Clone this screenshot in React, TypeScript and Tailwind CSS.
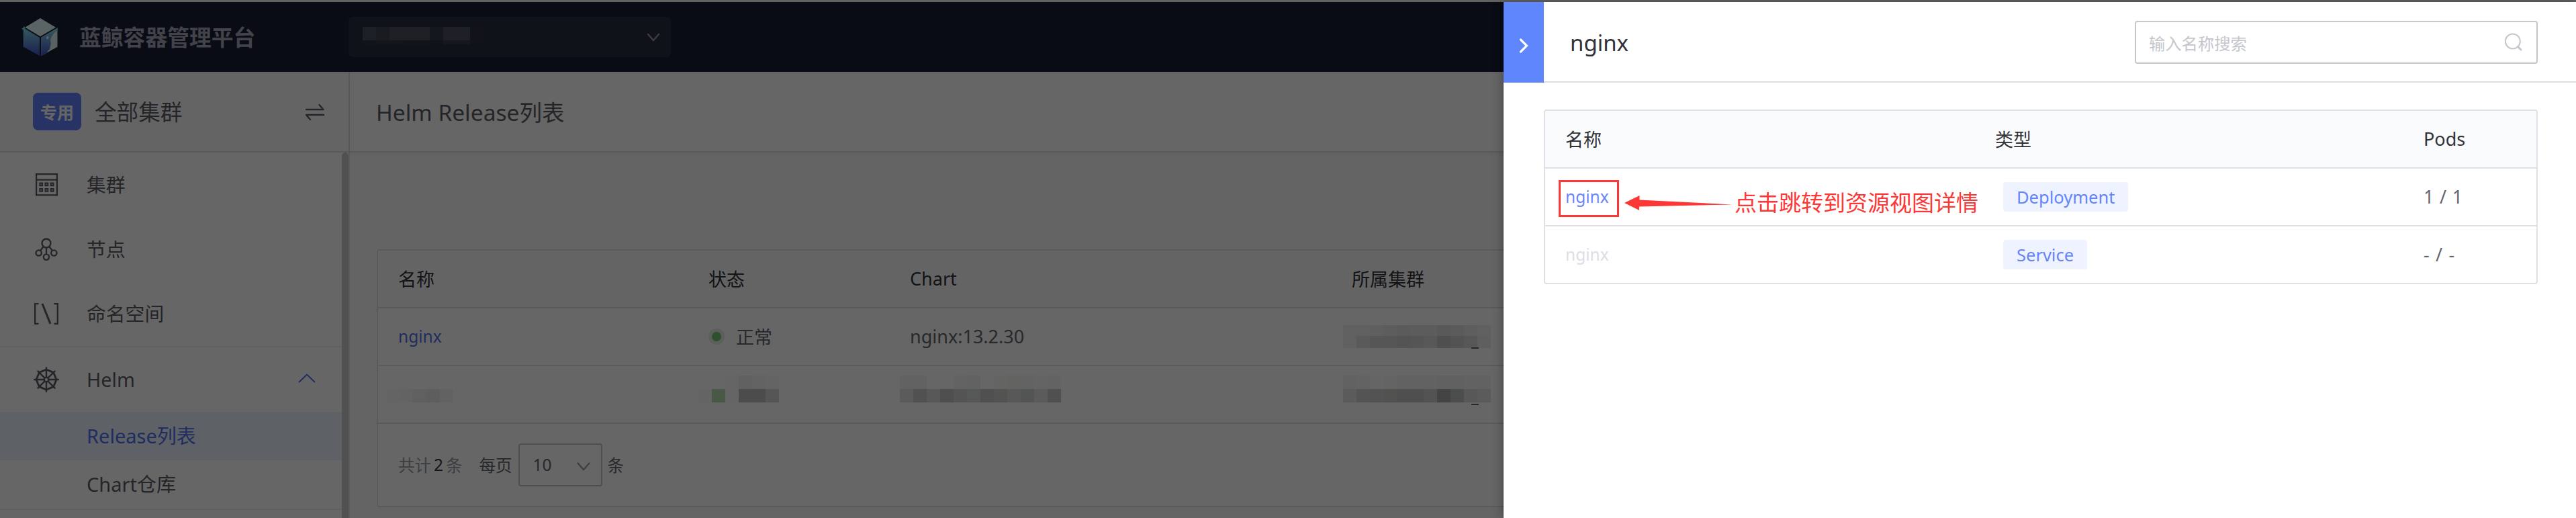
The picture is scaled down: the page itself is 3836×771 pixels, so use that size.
import type { ReactNode } from 'react';

/* ---------- icons ---------- */

function Logo() {
  return (
    <svg width="54" height="56" viewBox="0 0 54 56">
      <defs>
        <linearGradient id="face" x1="0" y1="14" x2="0" y2="56" gradientUnits="userSpaceOnUse">
          <stop offset="0" stopColor="#84dcf0" />
          <stop offset="0.4" stopColor="#6ba5dc" />
          <stop offset="1" stopColor="#4250c8" />
        </linearGradient>
      </defs>
      <path d="M28 0 51 13.7 28 27.3 5.3 13.7Z" fill="#e4fafa" />
      <path d="M0 15.5 2.8 14.6 3.6 11.8Q5.6 12.6 5.4 15.8L27 29V56L2.7 42.7V17.4Z" fill="url(#face)" />
      <path d="M29 29 53.5 14.5V42.7L29.5 56Z" fill="#dff5f2" />
      <path d="M29 29 53.7 14.5V18Q44 25 43 33 44.500 39 42.500 43 43 46 40 48 38 53 29.500 56Z" fill="url(#face)" />
      <ellipse cx="38.700" cy="29" rx="1.700" ry="2.400" fill="#e8ffff" transform="rotate(20 38.700 29)" />
    </svg>
  );
}

function Chevron({ className, w, h, points, sw }: { className?: string; w: number; h: number; points: string; sw: number }) {
  return (
    <svg className={className} width={w} height={h} viewBox={`0 0 ${w} ${h}`} fill="none" stroke="currentColor" strokeWidth={sw}>
      <polyline points={points} strokeLinecap="round" />
    </svg>
  );
}

function SwapIcon() {
  return (
    <svg width="30" height="26" viewBox="0 0 30 26" fill="none" stroke="currentColor" strokeWidth="2.400" strokeLinecap="round" strokeLinejoin="round">
      <path d="M2 9H27.500L21.500 2" />
      <path d="M28 17H2L8 24" />
    </svg>
  );
}

function ClusterIcon() {
  return (
    <svg width="33" height="34" viewBox="0 0 33 34" fill="none" stroke="currentColor" strokeWidth="2.200">
      <path d="M1.100 1.100H31.900V32.400H1.100ZM1.100 9.600H31.900" />
      <path d="M6.400 14.600h3.600v3.600h-3.600zM14.600 14.600h3.600v3.600h-3.600zM22.800 14.600h3.600v3.600h-3.600zM6.400 23h3.600v3.600h-3.600zM14.600 23h3.600v3.600h-3.600zM22.800 23h3.600v3.600h-3.600z" />
    </svg>
  );
}

function NodeIcon() {
  return (
    <svg width="34" height="34" viewBox="0 0 34 34" fill="none" stroke="currentColor" strokeWidth="2.300">
      <circle cx="17" cy="8" r="6.500" />
      <circle cx="5.700" cy="22.500" r="4.200" />
      <circle cx="28.300" cy="22.500" r="4.200" />
      <circle cx="17" cy="28.600" r="4.200" />
      <path d="M17 14.500V24.400M12.800 13 8 19M21.200 13 26 19" />
    </svg>
  );
}

function NamespaceIcon() {
  return (
    <svg width="38" height="32" viewBox="0 0 38 32" fill="none" stroke="currentColor" strokeWidth="2.300">
      <path d="M7.500 1.200H2.200V30.800H7.500M30.500 1.200H35.800V30.800H30.500" />
      <path d="M13 1 25 31" strokeWidth="3" />
    </svg>
  );
}

function HelmIcon() {
  return (
    <svg width="38" height="38" viewBox="-19 -19 38 38" fill="none" stroke="currentColor" strokeWidth="2.400" strokeLinecap="round">
      <path d="M0 -15 10.600 -10.600 15 0 10.600 10.600 0 15 -10.600 10.600 -15 0 -10.600 -10.600Z" strokeWidth="2.800" />
      <circle r="3.400" />
      <path d="M0 -3.400V-17.800M0 3.400V17.800M-3.400 0H-17.800M3.400 0H17.800" />
      <path d="M2.400 2.400 12.600 12.600M-2.400 2.400 -12.600 12.600M2.400 -2.400 12.600 -12.600M-2.400 -2.400 -12.600 -12.600" />
    </svg>
  );
}

function SearchIcon() {
  return (
    <svg width="28" height="28" viewBox="0 0 28 28" fill="none" stroke="#c4c6cc" strokeWidth="2">
      <circle cx="12.800" cy="12.500" r="11" />
      <path d="M20.500 20.500 25 25" strokeWidth="3" strokeLinecap="round" />
    </svg>
  );
}

/* ---------- masked values ---------- */

function Mosaic({ cells, height }: { cells: string[]; height: string }) {
  return (
    <div className={`flex ${height}`}>
      {cells.map((c, i) => (
        <div key={i} className={`w-5 ${c}`} />
      ))}
    </div>
  );
}

const projectTop = ['bg-[#4a5260]', 'bg-[#3e4452]', 'bg-[#4b525f]', 'bg-[#4b525f]', 'bg-[#4b525f]', 'bg-[#343b49]', 'bg-[#4b525f]', 'bg-[#4a515f]', 'bg-[#2b313f]'];
const projectBottom = ['bg-[#2c3240]', 'bg-[#343946]', 'bg-[#323744]', 'bg-[#2d3340]', 'bg-[#2f3441]', 'bg-[#2a303d]', 'bg-[#363b48]', 'bg-[#343a47]', 'bg-[#293040]'];
const nameCells = ['bg-[#fafafa]', 'bg-[#f8f8f8]', 'bg-[#efefef]', 'bg-[#ececec]', 'bg-[#f4f4f4]'];
const statusTop = ['bg-white', 'bg-white', 'bg-[#fcfcfc]', 'bg-[#f2f2f2]', 'bg-[#f8f8f8]', 'bg-[#fbfbfb]'];
const statusCells = ['bg-[#fbfbfb]', 'bg-[#b9dcae]', 'bg-[#fdfcfd]', 'bg-[#bfbfbf]', 'bg-[#bdbdbd]', 'bg-[#d5dad9]'];
const chartTop = ['bg-[#f6f6f6]', 'bg-[#f5f5f5]', 'bg-white', 'bg-white', 'bg-[#f6f7f6]', 'bg-[#f5f6f6]', 'bg-white', 'bg-[#f9f9f4]', 'bg-[#f8f8f4]', 'bg-[#f8f8f8]', 'bg-[#fafafa]', 'bg-[#f8f8f8]'];
const chartCells = ['bg-[#e4e4e4]', 'bg-[#cbcbcb]', 'bg-[#dcdcd8]', 'bg-[#c5c5c5]', 'bg-[#d2d3d2]', 'bg-[#d6dbd9]', 'bg-[#c9c9c9]', 'bg-[#d0d0ca]', 'bg-[#dbdbdb]', 'bg-[#cfd5d4]', 'bg-[#e4e4e6]', 'bg-[#c8c8c8]'];
const clusterATop = ['bg-[#f0f0f0]', 'bg-[#efefef]', 'bg-[#ededed]', 'bg-[#e9e9e9]', 'bg-[#e4e4e4]', 'bg-[#e3e6e5]', 'bg-[#e5e7e6]', 'bg-[#dedede]', 'bg-[#e3e3e3]', 'bg-[#ebebeb]', 'bg-[#efefef]'];
const clusterABottom = ['bg-[#f0f0f0]', 'bg-[#e0e0e0]', 'bg-[#d8d8d8]', 'bg-[#d8d8d8]', 'bg-[#d2d2d2]', 'bg-[#d5d5d5]', 'bg-[#dcdcdc]', 'bg-[#c5c5c5]', 'bg-[#d0d0d0]', 'bg-[#d9d9d9]', 'bg-[#ededed]'];
const clusterBTop = ['bg-[#f6f6f6]', 'bg-[#f8f8f8]', 'bg-[#fdfdfd]', 'bg-[#fafafa]', 'bg-[#f4f4f4]', 'bg-[#f6f6f6]', 'bg-[#f4f4f4]', 'bg-[#f3f3f3]', 'bg-[#f2f2f2]', 'bg-[#f4f4f4]', 'bg-[#f6f6f6]'];
const clusterBBottom = ['bg-[#e3e3e3]', 'bg-[#d3d3d3]', 'bg-[#cfcfcf]', 'bg-[#cdcdc9]', 'bg-[#c5c5c5]', 'bg-[#c6c6c9]', 'bg-[#cfcfcf]', 'bg-[#aaaaaa]', 'bg-[#bfc4c2]', 'bg-[#dcdcdc]', 'bg-[#e3e3e3]'];

/* ---------- page parts ---------- */

function TopBar() {
  return (
    <header className="flex h-[104px] shrink-0 items-center bg-[#182032]">
      <div className="flex w-[519px] items-center pl-8">
        <Logo />
        <h1 className="ml-[32px] pt-[2px] text-[32.8px] leading-10 font-bold text-[#a5a6b8]">蓝鲸容器管理平台</h1>
      </div>
      <div className="flex h-[60px] w-[480px] items-start justify-between rounded-[6px] bg-[#282f40] pt-[15px] pl-[21px]">
        <div>
          <Mosaic cells={projectTop} height="h-5" />
          <Mosaic cells={projectBottom} height="h-1.5" />
        </div>
        <Chevron className="mt-[9px] mr-[16px] text-[#979ba5]" w={20} h={14} points="2,2 10,11 18,2" sw={2.4} />
      </div>
    </header>
  );
}

function MenuItem({ icon, label, open }: { icon: ReactNode; label: string; open?: boolean }) {
  return (
    <li className="flex h-24 items-center">
      <span className="flex w-[129px] justify-start pl-[50px]">
        <span className="flex w-[38px] justify-center">{icon}</span>
      </span>
      <span className="flex-1 text-[28.800px] leading-10">{label}</span>
      {open && <Chevron className="mr-[39px] mb-[4px] text-[#4a6cf7]" w={26} h={14} points="1.500,12.500 13,1.500 24.500,12.500" sw={1.8} />}
    </li>
  );
}

function Sidebar() {
  return (
    <aside className="flex w-[521px] shrink-0 flex-col border-r-2 border-[#e2e2ea] bg-white text-[#5c5e66]">
      <div className="flex h-[120px] shrink-0 items-center border-b-2 border-[#e2e2ea] bg-[#fafbfd] pl-[49px]">
        <span className="flex h-14 w-[72px] items-center justify-center rounded-[8px] bg-[#6181fb] pt-[2px] text-[25px] leading-8 font-bold text-white">专用</span>
        <span className="ml-[20px] flex-1 pt-[2px] text-[32.600px] leading-10">全部集群</span>
        <span className="mr-[35px] pt-[2px]">
          <SwapIcon />
        </span>
      </div>
      <div className="flex flex-1">
        <nav className="w-[509px]">
          <ul className="border-b-2 border-[#f0f1f5]">
            <MenuItem icon={<ClusterIcon />} label="集群" />
            <MenuItem icon={<NodeIcon />} label="节点" />
            <MenuItem icon={<NamespaceIcon />} label="命名空间" />
          </ul>
          <ul className="border-b-2 border-[#f0f1f5]">
            <MenuItem icon={<HelmIcon />} label="Helm" open />
            <li className="flex h-[72px] items-center bg-[#ebf2ff] pl-[129px] text-[29px] leading-10 text-[#5070f0]">Release列表</li>
            <li className="flex h-[72px] items-center pl-[129px] text-[29px] leading-10">Chart仓库</li>
          </ul>
        </nav>
        <div className="w-2.5 rounded-t-full bg-[#cbcbcb]" />
      </div>
    </aside>
  );
}

function ReleaseRow({ children, className }: { children: ReactNode; className?: string }) {
  return (
    <div className={`grid h-[86px] grid-cols-[462px_300px_658px_1fr] items-center border-b-2 border-[#dfe0e5] text-[27px] leading-10 ${className ?? ''}`}>
      {children}
    </div>
  );
}

function ReleaseTable() {
  return (
    <div className="ml-10 rounded-[4px] border-2 border-[#dfe0e5] bg-white text-[#63656e]">
      <ReleaseRow className="bg-[#fafbfd] text-[#313238]">
        <span className="pt-[2px] pl-[30px]">名称</span>
        <span className="pt-[2px] pl-[30px]">状态</span>
        <span className="pl-[30px]">Chart</span>
        <span className="pt-[2px] pl-[30px]">所属集群</span>
      </ReleaseRow>
      <ReleaseRow>
        <span className="pl-[30px] text-[24.500px] text-[#5470e8]">nginx</span>
        <span className="flex items-center pl-[30px]">
          <span className="flex size-6 items-center justify-center rounded-full bg-[#e4f1e6]">
            <span className="size-3.5 rounded-full bg-[#76c76e]" />
          </span>
          <span className="ml-[17px] pt-[2px]">正常</span>
        </span>
        <span className="pl-[30px]">nginx:13.2.30</span>
        <div className="relative w-[239px] pl-[17px]">
          <Mosaic cells={clusterATop} height="h-4" />
          <Mosaic cells={clusterABottom} height="h-[18px]" />
          <span className="absolute top-[33px] left-[208px] h-0.5 w-[11px] bg-[#63656e]" />
        </div>
      </ReleaseRow>
      <ReleaseRow>
        <div className="pt-1 pl-[12px]">
          <Mosaic cells={nameCells} height="h-5" />
        </div>
        <div className="pb-4 pl-[15px]">
          <Mosaic cells={statusTop} height="h-5" />
          <Mosaic cells={statusCells} height="h-5" />
        </div>
        <div className="pb-4 pl-[15px]">
          <Mosaic cells={chartTop} height="h-5" />
          <Mosaic cells={chartCells} height="h-5" />
        </div>
        <div className="relative pb-4 pl-[17px]">
          <Mosaic cells={clusterBTop} height="h-5" />
          <Mosaic cells={clusterBBottom} height="h-5" />
          <span className="absolute top-[42px] left-[208px] h-0.5 w-[11px] bg-[#63656e]" />
        </div>
      </ReleaseRow>
      <div className="flex h-[122px] items-center pl-[30px] text-[24.500px] leading-10">
        <span className="pt-[2px] text-[#979ba5]">共计</span>
        <span className="mx-[4px] text-[#313238]">2</span>
        <span className="pt-[2px] text-[#979ba5]">条</span>
        <span className="ml-[25px] pt-[2px]">每页</span>
        <span className="mr-[8px] ml-[9px] flex h-16 w-[125px] items-center justify-between rounded-[4px] border-2 border-[#c4c6cc] pr-[16px] pl-[20px]">
          10
          <Chevron className="mt-[4px] text-[#979ba5]" w={20} h={13} points="1.500,1.500 10,11 18.500,1.500" sw={2.2} />
        </span>
        <span className="pt-[2px]">条</span>
      </div>
    </div>
  );
}

function Tag({ children }: { children: ReactNode }) {
  return <span className="ml-[12px] inline-flex h-11 items-center rounded-[4px] bg-[#eff3ff] px-[20px] text-[25.500px] text-[#6484fb]">{children}</span>;
}

function ResourceRow({ children, className }: { children: ReactNode; className?: string }) {
  return (
    <div className={`grid h-[86px] grid-cols-[640px_640px_196px] items-center border-b-2 border-[#dfe0e5] text-[27px] leading-10 last:h-[84px] last:border-b-0 ${className ?? ''}`}>
      {children}
    </div>
  );
}

function DetailPanel() {
  return (
    <section className="absolute top-[3px] right-0 bottom-0 w-[1597px] bg-white shadow-[-2px_0_14px_0_rgba(0,0,0,0.28)]">
      <div className="flex h-[120px]">
        <button className="flex w-[60px] items-center justify-center bg-[#6086fd] pt-[9px] text-white">
          <Chevron w={16} h={32} points="3.500,7 12.500,16 3.500,25" sw={3.2} />
        </button>
        <div className="flex flex-1 items-center border-b-2 border-[#dcdde5] pr-[57px] pl-[39px]">
          <h2 className="flex-1 pt-[3px] text-[33px] leading-10 text-[#313238]">nginx</h2>
          <div className="mt-[2px] flex h-16 w-[600px] items-center justify-between rounded-[4px] border-2 border-[#c4c6cc] pr-[20px] pl-[19px]">
            <span className="pt-[3px] text-[24.300px] leading-10 text-[#c4c6cc]">输入名称搜索</span>
            <SearchIcon />
          </div>
        </div>
      </div>
      <div className="mt-10 ml-[60px] w-[1480px] overflow-hidden rounded-[4px] border-2 border-[#dfe0e5] text-[#63656e]">
        <ResourceRow className="bg-[#fafbfd] text-[#313238]">
          <span className="pt-[2px] pl-[30px]">名称</span>
          <span className="pt-[2px] pl-[30px]">类型</span>
          <span className="pl-[28px]">Pods</span>
        </ResourceRow>
        <ResourceRow>
          <span className="pl-[30px] text-[24.500px] text-[#6a84fb]">nginx</span>
          <span className="flex pl-[30px]">
            <Tag>Deployment</Tag>
          </span>
          <span className="pl-[28px] tracking-[0.8px]">1 / 1</span>
        </ResourceRow>
        <ResourceRow>
          <span className="pl-[30px] text-[24.500px] text-[#dcdee5]">nginx</span>
          <span className="flex pl-[30px]">
            <Tag>Service</Tag>
          </span>
          <span className="pl-[28px] tracking-[1.2px]">- / -</span>
        </ResourceRow>
      </div>

      <div className="absolute top-[265px] left-[82px] h-[55px] w-[90px] border-3 border-[#fb3836]" />
      <div className="absolute top-[279px] left-[180px] flex items-center">
        <svg width="164" height="40" viewBox="0 0 164 40" fill="#fb3836">
          <path d="M0 20 22.500 9V15.500L161 22.500 22 25.500V31Z" />
        </svg>
        <span className="text-[33px] leading-10 whitespace-nowrap text-[#fb3836]">点击跳转到资源视图详情</span>
      </div>
    </section>
  );
}

export default function App() {
  return (
    <div className="relative flex h-[771px] w-[3836px] flex-col overflow-hidden bg-[#fafbfd] font-['Noto_Sans','Noto_Sans_CJK_SC',sans-serif]">
      <div className="h-[3px] shrink-0 bg-[#f4f4f8]" />
      <TopBar />
      <div className="flex min-h-0 flex-1">
        <Sidebar />
        <main className="flex-1 bg-[#fafafb]">
          <div className="mb-36 flex h-[120px] items-center border-b-2 border-[#e2e2ea] bg-white pt-[2px] pl-[39px] text-[33.500px] leading-10 text-[#5c5e66] shadow-[0_3px_4px_0_rgba(64,64,64,0.06)]">
            Helm Release列表
          </div>
          <ReleaseTable />
        </main>
      </div>
      <div className="absolute inset-0 bg-black/60" />
      <DetailPanel />
    </div>
  );
}
